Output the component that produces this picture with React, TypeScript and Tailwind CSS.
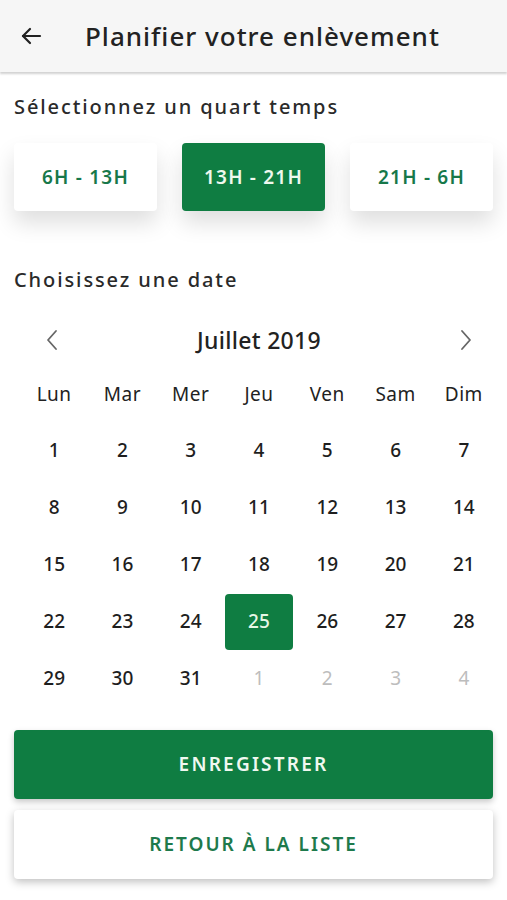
import React from "react";

const font = { fontFamily: '"Noto Sans", "Open Sans", sans-serif' };

const weekdays = ["Lun", "Mar", "Mer", "Jeu", "Ven", "Sam", "Dim"];

type Day = { n: number; muted?: boolean; selected?: boolean };

const days: Day[] = [
  ...Array.from({ length: 31 }, (_, i) => ({ n: i + 1, selected: i + 1 === 25 })),
  { n: 1, muted: true },
  { n: 2, muted: true },
  { n: 3, muted: true },
  { n: 4, muted: true },
];

export default function App() {
  return (
    <div className="w-[507px] h-[900px] bg-white overflow-hidden text-[#222]" style={font}>
      {/* Header */}
      <div className="h-[72px] bg-[#f6f6f6] flex items-center shadow-[0_2px_2px_rgba(0,0,0,0.18)] relative z-10">
        <div className="w-[60px] flex justify-center pl-[2px]">
          <svg width="22" height="20" viewBox="0 0 22 20" fill="none" stroke="#222" strokeWidth="2.2" strokeLinecap="round" strokeLinejoin="round">
            <path d="M20 10H3" />
            <path d="M10 3L3 10l7 7" />
          </svg>
        </div>
        <div className="ml-[25px] text-[26px] font-medium text-[#222] tracking-[1px]">Planifier votre enlèvement</div>
      </div>

      <div className="px-[14px]">
        <div className="pt-[21px] text-[20px] font-medium text-[#2a2a2a] tracking-[1.9px] leading-[28px]">Sélectionnez un quart temps</div>

        <div className="mt-[22px] flex gap-[25px]">
          {["6H - 13H", "13H - 21H", "21H - 6H"].map((t, i) => (
            <div
              key={t}
              className={`w-[143px] h-[68px] rounded-[4px] flex items-center justify-center text-[19px] font-semibold tracking-[1.2px] shadow-[0_12px_22px_rgba(0,0,0,0.13)] ${
                i === 1 ? "bg-[#0f7d42] text-[#eef8ee]" : "bg-white text-[#17784a]"
              }`}
            >
              {t}
            </div>
          ))}
        </div>

        <div className="mt-[55px] text-[20px] font-medium text-[#2a2a2a] tracking-[1.9px] leading-[28px]">Choisissez une date</div>
      </div>

      {/* Calendar */}
      <div className="mt-[26px] ml-[20px] w-[478px]">
        <div className="flex items-center justify-between h-[40px] px-[26px]">
          <svg width="12" height="22" viewBox="0 0 12 22" fill="none" stroke="#666" strokeWidth="1.8" strokeLinecap="round" strokeLinejoin="round">
            <path d="M10 2L2 11l8 9" />
          </svg>
          <div className="text-[23px] font-medium text-[#222] tracking-[0.3px]">Juillet 2019</div>
          <svg width="12" height="22" viewBox="0 0 12 22" fill="none" stroke="#666" strokeWidth="1.8" strokeLinecap="round" strokeLinejoin="round">
            <path d="M2 2l8 9-8 9" />
          </svg>
        </div>

        <div className="grid grid-cols-7 mt-[14px]">
          {weekdays.map((w) => (
            <div key={w} className="h-[40px] flex items-center justify-center text-[19px] text-[#222] tracking-[0.5px]">
              {w}
            </div>
          ))}
        </div>

        <div className="grid grid-cols-7 mt-[8px]">
          {days.map((d, i) => (
            <div key={i} className="h-[57px] flex items-center justify-center">
              {d.selected ? (
                <div className="w-[68px] h-[56px] rounded-[4px] bg-[#0f7d42] flex items-center justify-center text-[19px] font-medium text-[#e6f6e6]">
                  {d.n}
                </div>
              ) : (
                <span className={`text-[19px] font-medium ${d.muted ? "text-[#bdbdbd] font-normal" : "text-[#1e1e1e]"}`}>{d.n}</span>
              )}
            </div>
          ))}
        </div>
      </div>

      {/* Buttons */}
      <div className="px-[14px] mt-[23px] flex flex-col gap-[11px]">
        <div className="h-[69px] rounded-[4px] bg-[#0f7d42] flex items-center justify-center text-[19px] font-semibold tracking-[2.2px] text-[#f0f8f0] shadow-[0_3px_6px_rgba(0,0,0,0.22)]">
          ENREGISTRER
        </div>
        <div className="h-[69px] rounded-[4px] bg-white flex items-center justify-center text-[19px] font-semibold tracking-[2px] text-[#1e7a4c] shadow-[0_3px_8px_rgba(0,0,0,0.25)]">
          RETOUR À LA LISTE
        </div>
      </div>
    </div>
  );
}
